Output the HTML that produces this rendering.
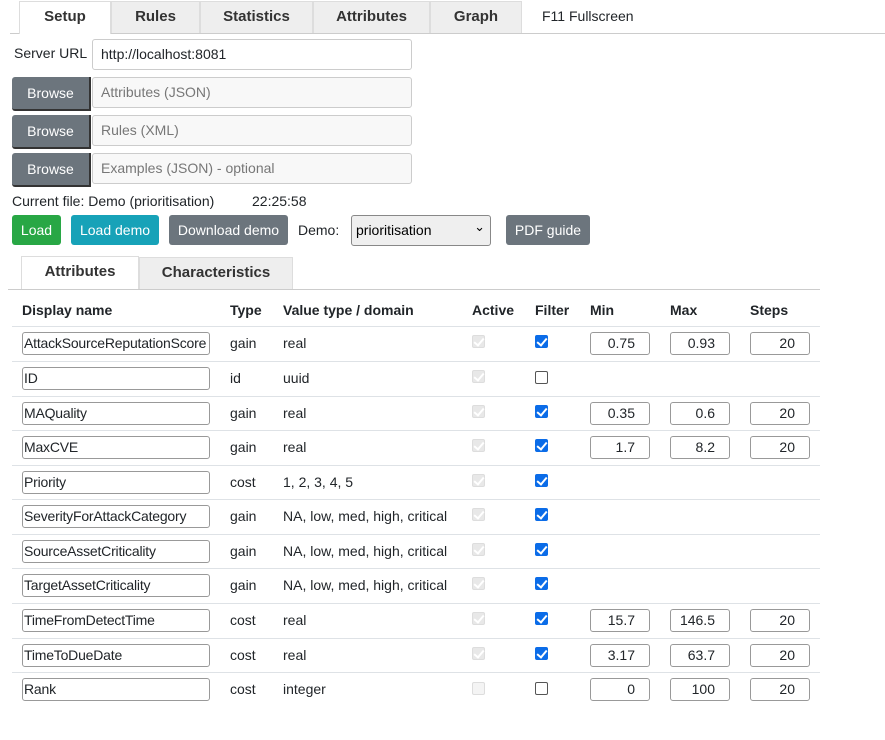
<!DOCTYPE html>
<html><head><style>
*{box-sizing:border-box}
body{margin:0;width:885px;height:740px;background:#fff;font-family:"Liberation Sans",sans-serif;font-size:14px;color:#212529;position:relative;overflow:hidden}
.a{position:absolute}
.tab{position:absolute;top:1px;height:32px;background:#eee;border:1px solid #ddd;border-bottom:none;font-weight:bold;font-size:15px;color:#333;text-align:center;line-height:30px}
.inp{position:absolute;border:1px solid #ccc;border-radius:3px;background:#fff;font-size:14px;padding-left:8px}
.br{position:absolute;left:12px;width:79px;height:34px;background:#6c757d;color:#fff;border-radius:3px 0 0 3px;border-bottom:2px solid #333;border-right:2px solid #333;text-align:center;line-height:32px;font-size:14px}
.ph{position:absolute;left:92px;width:320px;height:31px;border:1px solid #ccc;border-radius:3px;background:#f8f8f8;color:#777;padding-left:8px;line-height:29px}
.btn{position:absolute;top:215px;height:30px;color:#fff;border-radius:3px;text-align:center;line-height:30px;font-size:14px}
.row{position:absolute;left:12px;width:808px;border-top:1px solid #dee2e6}
.name{position:absolute;left:22px;width:188px;height:23px;border:1px solid #999;border-radius:3px;padding-left:1px;line-height:21px;white-space:nowrap;overflow:hidden;font-size:14px;letter-spacing:-0.2px}
.num{position:absolute;width:60px;height:23px;border:1px solid #999;border-radius:3px;text-align:right;padding-right:14px;line-height:21px}
.t{position:absolute;line-height:16px}
.cb{position:absolute;width:13px;height:13px;border-radius:2px}
.dis{border:1px solid #ddd;background:#e8e8e8}
.dis:after{content:"";position:absolute;left:3px;top:0px;width:4px;height:8px;border:solid #fff;border-width:0 2px 2px 0;transform:rotate(40deg)}
.on{background:#0b6ce8;border:1px solid #0b6ce8}
.on:after{content:"";position:absolute;left:3px;top:0px;width:4px;height:8px;border:solid #fff;border-width:0 2px 2px 0;transform:rotate(40deg)}
.off{border:1px solid #555;background:#fff}
</style></head><body>
<div class="a" style="left:10px;top:33px;width:875px;border-top:1px solid #ccc"></div>
<div class="tab" style="left:19px;width:92px;background:#fff;border-color:#ddd;height:33px">Setup</div>
<div class="tab" style="left:111px;width:89px">Rules</div>
<div class="tab" style="left:200px;width:113px">Statistics</div>
<div class="tab" style="left:313px;width:117px">Attributes</div>
<div class="tab" style="left:430px;width:92px">Graph</div>
<div class="a" style="left:542px;top:8px;font-size:14px">F11 Fullscreen</div>
<div class="a" style="left:14px;top:45px">Server URL</div>
<div class="inp" style="left:92px;top:39px;width:320px;height:31px;line-height:29px">http://localhost:8081</div>
<div class="br" style="top:77px">Browse</div><div class="ph" style="top:77px">Attributes (JSON)</div>
<div class="br" style="top:115px">Browse</div><div class="ph" style="top:115px">Rules (XML)</div>
<div class="br" style="top:153px">Browse</div><div class="ph" style="top:153px">Examples (JSON) - optional</div>
<div class="a" style="left:12px;top:193px">Current file: Demo (prioritisation)</div>
<div class="a" style="left:252px;top:193px">22:25:58</div>
<div class="btn" style="left:12px;width:49px;background:#28a745">Load</div>
<div class="btn" style="left:71px;width:88px;background:#17a2b8">Load demo</div>
<div class="btn" style="left:169px;width:119px;background:#6c757d">Download demo</div>
<div class="a" style="left:298px;top:222px">Demo:</div>
<div class="a" style="left:351px;top:215px;width:140px;height:31px;border:1px solid #888;border-radius:3px;background:#efefef;padding:6px 4px;font-size:14px;color:#000">prioritisation<span style="position:absolute;right:5px;top:3px;font-size:13px">&#8964;</span></div>
<div class="btn" style="left:506px;width:84px;background:#6c757d">PDF guide</div>
<div class="a" style="left:8px;top:289px;width:812px;border-top:1px solid #ccc"></div>
<div class="tab" style="left:21px;top:256px;width:118px;height:33px;background:#fff;line-height:30px">Attributes</div>
<div class="tab" style="left:139px;top:257px;width:154px;height:32px;line-height:30px">Characteristics</div>
<div class="a" style="top:302px;left:0;width:885px;font-weight:bold;font-size:14px">
<span class="a" style="left:22px">Display name</span><span class="a" style="left:230px">Type</span><span class="a" style="left:283px">Value type / domain</span><span class="a" style="left:472px">Active</span><span class="a" style="left:535px">Filter</span><span class="a" style="left:590px">Min</span><span class="a" style="left:670px">Max</span><span class="a" style="left:750px">Steps</span></div>
<div class="row" style="top:326px"></div><div class="row" style="top:361px"></div><div class="row" style="top:396px"></div><div class="row" style="top:430px"></div><div class="row" style="top:465px"></div><div class="row" style="top:499px"></div><div class="row" style="top:534px"></div><div class="row" style="top:568px"></div><div class="row" style="top:603px"></div><div class="row" style="top:638px"></div><div class="row" style="top:672px"></div>

<div class="name" style="top:332px">AttackSourceReputationScore</div><span class="t" style="left:230px;top:335px">gain</span><span class="t" style="left:283px;top:335px">real</span><div class="cb dis" style="left:472px;top:335px"></div><div class="cb on" style="left:535px;top:335px"></div><div class="num" style="left:590px;top:332px">0.75</div><div class="num" style="left:670px;top:332px">0.93</div><div class="num" style="left:750px;top:332px">20</div>
<div class="name" style="top:367px">ID</div><span class="t" style="left:230px;top:370px">id</span><span class="t" style="left:283px;top:370px">uuid</span><div class="cb dis" style="left:472px;top:370px"></div><div class="cb off" style="left:535px;top:371px"></div>
<div class="name" style="top:402px">MAQuality</div><span class="t" style="left:230px;top:405px">gain</span><span class="t" style="left:283px;top:405px">real</span><div class="cb dis" style="left:472px;top:405px"></div><div class="cb on" style="left:535px;top:405px"></div><div class="num" style="left:590px;top:402px">0.35</div><div class="num" style="left:670px;top:402px">0.6</div><div class="num" style="left:750px;top:402px">20</div>
<div class="name" style="top:436px">MaxCVE</div><span class="t" style="left:230px;top:439px">gain</span><span class="t" style="left:283px;top:439px">real</span><div class="cb dis" style="left:472px;top:439px"></div><div class="cb on" style="left:535px;top:439px"></div><div class="num" style="left:590px;top:436px">1.7</div><div class="num" style="left:670px;top:436px">8.2</div><div class="num" style="left:750px;top:436px">20</div>
<div class="name" style="top:471px">Priority</div><span class="t" style="left:230px;top:474px">cost</span><span class="t" style="left:283px;top:474px">1, 2, 3, 4, 5</span><div class="cb dis" style="left:472px;top:474px"></div><div class="cb on" style="left:535px;top:474px"></div>
<div class="name" style="top:505px">SeverityForAttackCategory</div><span class="t" style="left:230px;top:508px">gain</span><span class="t" style="left:283px;top:508px">NA, low, med, high, critical</span><div class="cb dis" style="left:472px;top:508px"></div><div class="cb on" style="left:535px;top:508px"></div>
<div class="name" style="top:540px">SourceAssetCriticality</div><span class="t" style="left:230px;top:543px">gain</span><span class="t" style="left:283px;top:543px">NA, low, med, high, critical</span><div class="cb dis" style="left:472px;top:543px"></div><div class="cb on" style="left:535px;top:543px"></div>
<div class="name" style="top:574px">TargetAssetCriticality</div><span class="t" style="left:230px;top:577px">gain</span><span class="t" style="left:283px;top:577px">NA, low, med, high, critical</span><div class="cb dis" style="left:472px;top:577px"></div><div class="cb on" style="left:535px;top:577px"></div>
<div class="name" style="top:609px">TimeFromDetectTime</div><span class="t" style="left:230px;top:612px">cost</span><span class="t" style="left:283px;top:612px">real</span><div class="cb dis" style="left:472px;top:612px"></div><div class="cb on" style="left:535px;top:612px"></div><div class="num" style="left:590px;top:609px">15.7</div><div class="num" style="left:670px;top:609px">146.5</div><div class="num" style="left:750px;top:609px">20</div>
<div class="name" style="top:644px">TimeToDueDate</div><span class="t" style="left:230px;top:647px">cost</span><span class="t" style="left:283px;top:647px">real</span><div class="cb dis" style="left:472px;top:647px"></div><div class="cb on" style="left:535px;top:647px"></div><div class="num" style="left:590px;top:644px">3.17</div><div class="num" style="left:670px;top:644px">63.7</div><div class="num" style="left:750px;top:644px">20</div>
<div class="name" style="top:678px">Rank</div><span class="t" style="left:230px;top:681px">cost</span><span class="t" style="left:283px;top:681px">integer</span><div class="cb" style="left:472px;top:682px;border:1px solid #ddd;background:#f4f4f4"></div><div class="cb off" style="left:535px;top:682px"></div><div class="num" style="left:590px;top:678px">0</div><div class="num" style="left:670px;top:678px">100</div><div class="num" style="left:750px;top:678px">20</div>
</body></html>
